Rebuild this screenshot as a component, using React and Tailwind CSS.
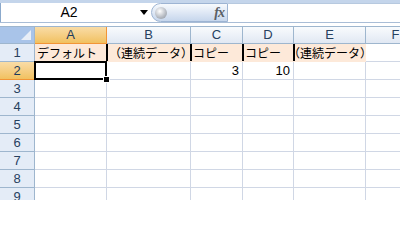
const cols = [
  { key: "A", w: "w-[72px]" },
  { key: "B", w: "w-[84px]" },
  { key: "C", w: "w-[52px]" },
  { key: "D", w: "w-[51px]" },
  { key: "E", w: "w-[72px]" },
  { key: "F", w: "w-[60px]" },
];

const row1 = {
  A: "デフォルト",
  B: "（連続データ）",
  C: "コピー",
  D: "コピー",
  E: "（連続データ）",
};

const row2 = { C: "3", D: "10" };

const jp = { fontFamily: '"Noto Sans CJK JP", "Liberation Sans", sans-serif' };
const latin = { fontFamily: '"Liberation Sans", Arial, sans-serif' };

function ColHeader({ col }) {
  const active = col.key === "A";
  return (
    <div
      className={`${col.w} h-[17px] shrink-0 flex items-center justify-center border-r border-b text-[13px] ${
        active
          ? "bg-gradient-to-b from-[#f9dca6] to-[#f1c15f] border-[#f29536] text-[#1c3b5c]"
          : "bg-gradient-to-b from-[#f9fbfd] to-[#e1e8f3] border-[#9eb6ce] text-[#27415f]"
      }`}
      style={latin}
    >
      {col.key}
    </div>
  );
}

function RowHeader({ n }) {
  const active = n === 2;
  return (
    <div
      className={`w-[35px] h-[18px] shrink-0 flex items-center justify-center border-r border-b text-[13px] ${
        active
          ? "bg-gradient-to-b from-[#f9dca6] to-[#f1c15f] border-[#f29536] text-[#1c3b5c]"
          : "bg-[#e4ecf7] border-[#9eb6ce] text-[#27415f]"
      }`}
      style={latin}
    >
      {n}
    </div>
  );
}

function Cell({ col, n }) {
  if (n === 1 && row1[col.key]) {
    const bar = col.key !== "E";
    return (
      <div
        className={`${col.w} h-[18px] shrink-0 relative bg-[#fde9d9] border-b border-[#fde9d9] flex items-center whitespace-nowrap text-[12px] text-black ${
          col.key === "E" ? "pl-0" : "pl-[2px]"
        }`}
        style={jp}
      >
        <span className={col.key === "E" ? "-ml-[6px]" : ""}>{row1[col.key]}</span>
        {bar && <span className="absolute z-10 right-[-1px] top-0 bottom-0 w-[2px] bg-black" />}
      </div>
    );
  }
  const isSel = n === 2 && col.key === "A";
  return (
    <div
      className={`${col.w} h-[18px] shrink-0 relative border-r border-b border-[#d0d7e5] flex items-center justify-end pr-[3px] text-[13px] text-black ${
        isSel ? "z-10" : ""
      }`}
      style={latin}
    >
      {n === 2 && row2[col.key]}
      {isSel && (
        <>
          <span className="absolute -left-[1px] -top-[1px] -right-[1px] -bottom-[1px] border-2 border-black" />
          <span className="absolute -right-[4px] -bottom-[4px] w-[7px] h-[7px] bg-black border border-white" />
        </>
      )}
    </div>
  );
}

export default function App() {
  return (
    <div className="w-[400px] h-[200px] overflow-hidden bg-white">
      {/* formula bar */}
      <div className="h-[3px] bg-[#c4d5eb]" />
      <div className="h-[19px] flex bg-white">
        <div className="w-[148px] h-full border-l border-[#8ba9cc] relative flex items-center">
          <span className="w-[136px] text-center text-[14px] text-black" style={latin}>
            A2
          </span>
          <svg className="absolute left-[139px] top-[7px]" width="8" height="5" viewBox="0 0 8 5">
            <path d="M0 0H8L4 5Z" fill="#000" />
          </svg>
        </div>
        <div className="w-[3px]" />
        <div className="w-[77px] h-full rounded-l-full border border-[#9db4d3] bg-gradient-to-b from-[#f7fafd] via-[#dfe8f5] to-[#c6d6ec] flex items-center">
          <span className="ml-[3px] w-[12px] h-[12px] rounded-full bg-[radial-gradient(circle_at_40%_35%,#ffffff,#b3b8c0_60%,#8e949c)]" />
          <span
            className="ml-auto mr-[3px] text-[14px] italic font-bold text-[#5a5f66] tracking-[-1px]"
            style={{ fontFamily: '"Liberation Serif", "Times New Roman", serif' }}
          >
            fx
          </span>
        </div>
        <div className="flex-1 h-full bg-white border-t border-[#b7c9df]" />
      </div>
      <div className="h-[5px] border-t border-[#a9bdd6] border-b border-b-[#9eb6ce] bg-white" />

      {/* header row */}
      <div className="flex">
        <div className="w-[35px] h-[17px] shrink-0 border-r border-b border-[#9eb6ce] bg-[#a9c4e9] relative">
          <svg className="absolute right-[3px] bottom-[3px]" width="10" height="10" viewBox="0 0 10 10">
            <path d="M10 0V10H0Z" fill="#e8eef7" />
          </svg>
        </div>
        {cols.map((c) => (
          <ColHeader key={c.key} col={c} />
        ))}
      </div>

      {[1, 2, 3, 4, 5, 6, 7, 8, 9].map((n) => (
        <div key={n} className="flex">
          <RowHeader n={n} />
          {cols.map((c) => (
            <Cell key={c.key} col={c} n={n} />
          ))}
        </div>
      ))}
    </div>
  );
}
